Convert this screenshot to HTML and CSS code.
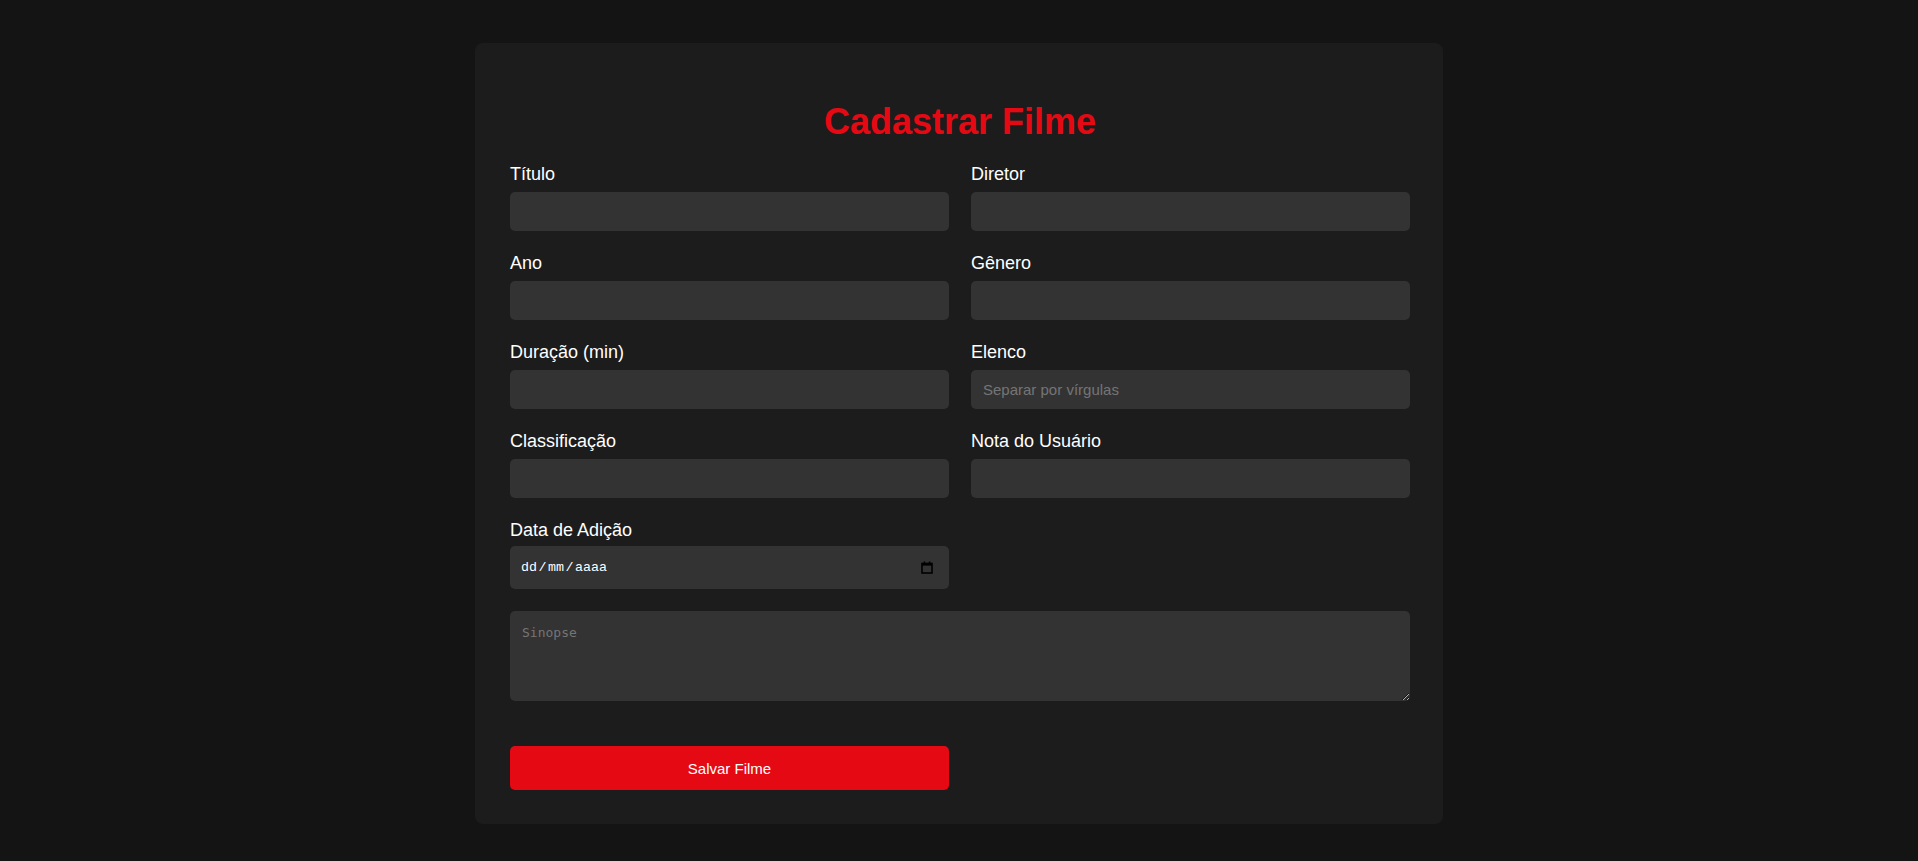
FILE: index.html
```html
<!DOCTYPE html>
<html lang="pt-BR">
<head>
<meta charset="utf-8">
<title>Cadastrar Filme</title>
<link rel="stylesheet" href="styles.css">
</head>
<body>
  <main class="card">
    <h1 class="title">Cadastrar Filme</h1>
    <form class="form">
      <div class="field">
        <label class="label" for="titulo">Título</label>
        <input class="input" id="titulo" type="text">
      </div>
      <div class="field">
        <label class="label" for="diretor">Diretor</label>
        <input class="input" id="diretor" type="text">
      </div>
      <div class="field">
        <label class="label" for="ano">Ano</label>
        <input class="input" id="ano" type="text">
      </div>
      <div class="field">
        <label class="label" for="genero">Gênero</label>
        <input class="input" id="genero" type="text">
      </div>
      <div class="field">
        <label class="label" for="duracao">Duração (min)</label>
        <input class="input" id="duracao" type="text">
      </div>
      <div class="field">
        <label class="label" for="elenco">Elenco</label>
        <input class="input" id="elenco" type="text" placeholder="Separar por vírgulas">
      </div>
      <div class="field">
        <label class="label" for="classificacao">Classificação</label>
        <input class="input" id="classificacao" type="text">
      </div>
      <div class="field">
        <label class="label" for="nota">Nota do Usuário</label>
        <input class="input" id="nota" type="text">
      </div>
      <div class="field field-date">
        <label class="label">Data de Adição</label>
        <div class="date-field">
          <span class="date-text">dd<span class="sep">/</span>mm<span class="sep">/</span>aaaa</span>
          <svg class="cal-icon" width="12" height="13" viewBox="0 0 12 13" aria-hidden="true">
            <rect x="1" y="2.5" width="10" height="9.5" fill="none" stroke="#000" stroke-width="1.6"/>
            <rect x="1" y="2" width="10" height="2.6" fill="#000"/>
            <rect x="2.6" y="0.5" width="1.6" height="2" fill="#000"/>
            <rect x="7.8" y="0.5" width="1.6" height="2" fill="#000"/>
          </svg>
        </div>
      </div>
      <div class="field empty"></div>
      <textarea class="textarea" placeholder="Sinopse"></textarea>
      <div class="actions">
        <button class="btn" type="button">Salvar Filme</button>
      </div>
    </form>
  </main>
</body>
</html>
```

FILE: styles.css
```css
* { box-sizing: border-box; }

html, body {
  margin: 0;
  background: #141414;
}

body {
  padding: 43px 0 38px;
  font-family: "Liberation Sans", Arial, sans-serif;
  color: #fff;
}

.card {
  width: 968px;
  margin: 0 auto;
  background: #1c1c1c;
  border-radius: 8px;
  padding: 34px 33px 34px 35px;
}

.title {
  margin: 24px 0 22px;
  text-align: center;
  color: #e50914;
  font-size: 36px;
  font-weight: 700;
  line-height: 41px;
}

.form {
  display: grid;
  grid-template-columns: 1fr 1fr;
  column-gap: 22px;
  row-gap: 22px;
}

.field {
  display: flex;
  flex-direction: column;
  gap: 7px;
}

.field-date {
  gap: 5px;
}

.label {
  font-size: 18px;
  line-height: 21px;
  color: #fff;
}

.input {
  height: 39px;
  border: none;
  border-radius: 5px;
  background: #333;
  color: #fff;
  padding: 0 12px;
  font-family: "Liberation Sans", Arial, sans-serif;
  font-size: 15px;
  outline: none;
}

.input::placeholder {
  color: #757575;
}

.date-field {
  height: 43px;
  border-radius: 5px;
  background: #333;
  display: flex;
  align-items: center;
  justify-content: space-between;
  padding: 0 16px 0 11px;
}

.date-text {
  font-family: "Liberation Mono", "DejaVu Sans Mono", monospace;
  font-size: 13.33px;
  color: #fff;
}

.sep {
  margin: 0 1.5px;
}

.cal-icon {
  display: block;
}

.textarea {
  grid-column: 1 / 3;
  height: 90px;
  border: none;
  border-radius: 5px;
  background: #333;
  color: #fff;
  padding: 14px 12px 12px;
  font-family: "DejaVu Sans Mono", "Liberation Mono", monospace;
  font-size: 13px;
  outline: none;
  resize: vertical;
  display: block;
}

.textarea::placeholder {
  color: #757575;
}

.actions {
  grid-column: 1 / 2;
  margin-top: 23px;
}

.btn {
  width: 100%;
  height: 44px;
  border: none;
  border-radius: 5px;
  background: #e50914;
  color: #fff;
  font-family: "Liberation Sans", Arial, sans-serif;
  font-size: 15px;
  cursor: pointer;
}
```
